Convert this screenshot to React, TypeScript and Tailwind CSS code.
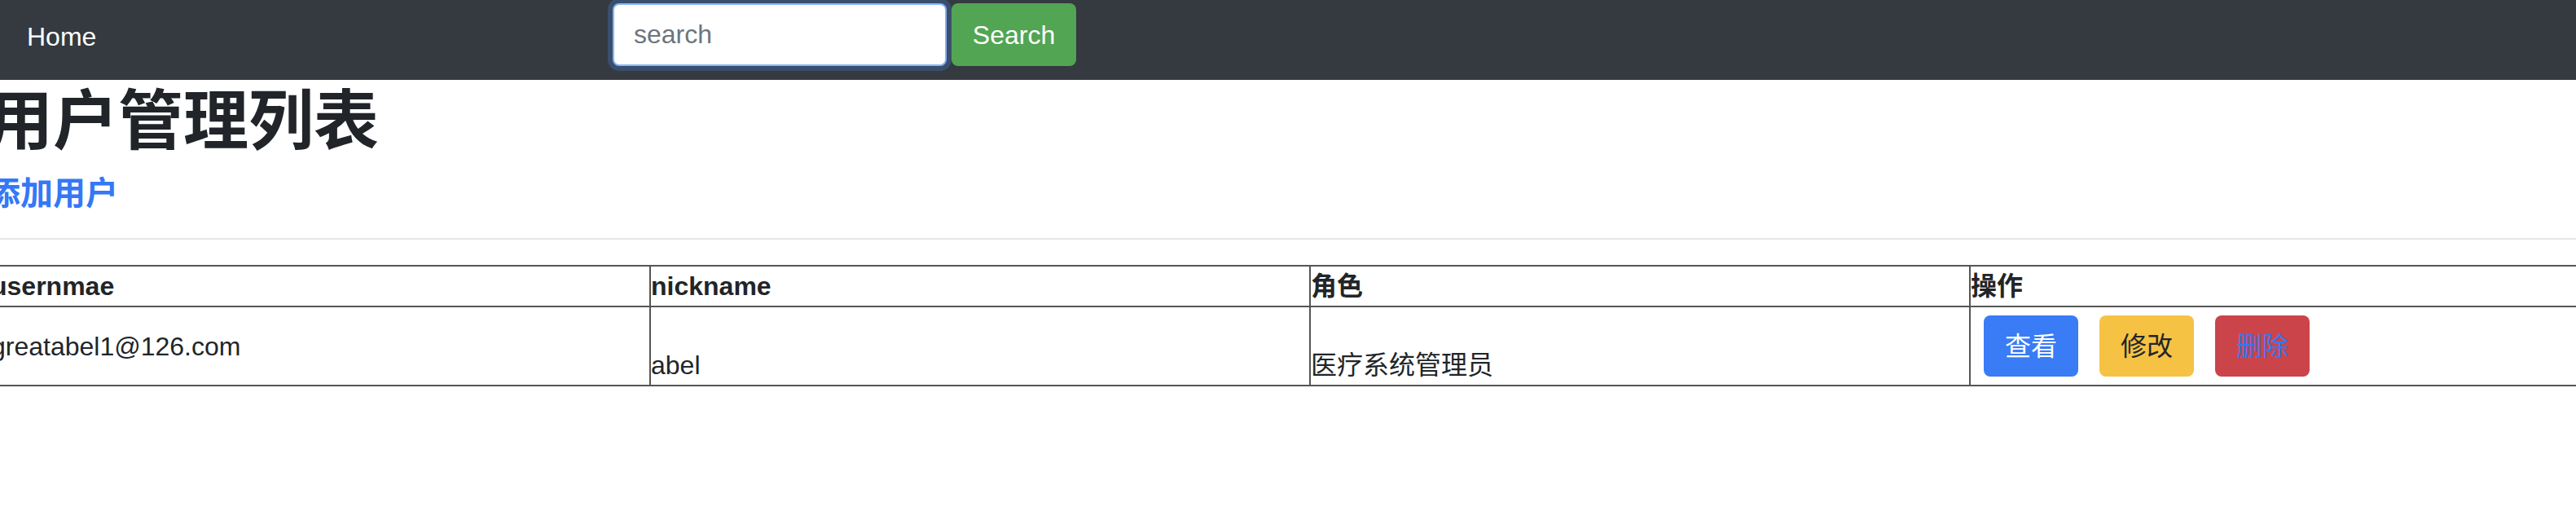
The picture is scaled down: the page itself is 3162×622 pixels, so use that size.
import React from "react";

const users = [
  { username: "greatabel1@126.com", nickname: "abel", role: "医疗系统管理员" },
];

export default function App() {
  return (
    <div className="w-full overflow-hidden bg-white text-[#212529] font-[family-name:'Liberation_Sans','Noto_Sans_CJK_SC',sans-serif]">
      {/* Navbar */}
      <nav className="flex h-[98px] items-start bg-[#343a40]">
        <div className="w-[752px] shrink-0 pl-[33px] pt-[21px]">
          <a className="text-[32px] leading-[48px] text-white">Home</a>
        </div>
        <div className="mt-[4px] flex items-start gap-[6px]">
          <input
            placeholder="search"
            className="h-[77px] w-[410px] rounded-[8px] border-2 border-[#86b7f5] bg-white px-[24px] text-[32px] text-[#495057] shadow-[0_0_0_6px_#3a4f6e] outline-none placeholder:text-[#6c757d]"
          />
          <button className="h-[77px] w-[153px] rounded-[8px] bg-[#52a552] text-[32px] text-white">
            Search
          </button>
        </div>
      </nav>

      <div className="ml-[-15px]">
        <h1 className="mt-[3px] text-[80px] font-semibold leading-[96px]">用户管理列表</h1>
        <a className="mt-[16px] block text-[40px] font-semibold leading-[48px] text-[#3478f6]">添加用户</a>
        <hr className="mt-[31px] border-0 border-t-2 border-[#e6e6e6]" />

        <table className="ml-[2px] mt-[31px] w-[3240px] table-fixed border-collapse border-2 border-[#555]">
          <thead>
            <tr>
              <th className="w-[810px] border-2 border-[#555] p-0 text-left text-[32px] font-bold leading-[48px]">usernmae</th>
              <th className="w-[810px] border-2 border-[#555] p-0 text-left text-[32px] font-bold leading-[48px]">nickname</th>
              <th className="w-[810px] border-2 border-[#555] p-0 text-left text-[32px] font-bold leading-[48px]">角色</th>
              <th className="w-[810px] border-2 border-[#555] p-0 text-left text-[32px] font-bold leading-[48px]">操作</th>
            </tr>
          </thead>
          <tbody>
            {users.map((u) => (
              <tr key={u.username} className="h-[97px]">
                <td className="border-2 border-[#555] p-0 align-middle text-[32px] leading-[48px]">{u.username}</td>
                <td className="border-2 border-[#555] p-0 align-bottom text-[32px] leading-[48px]">{u.nickname}</td>
                <td className="border-2 border-[#555] p-0 align-bottom text-[32px] leading-[48px]">{u.role}</td>
                <td className="border-2 border-[#555] p-0 align-middle">
                  <div className="ml-[16px] flex gap-[26px]">
                    <button className="h-[75px] w-[116px] rounded-[8px] bg-[#3a7bf6] text-[32px] text-white">查看</button>
                    <button className="h-[75px] w-[116px] rounded-[8px] bg-[#f6c244] text-[32px] text-[#212529]">修改</button>
                    <button className="h-[75px] w-[116px] rounded-[8px] bg-[#cb444a] text-[32px] text-[#3478f6]">删除</button>
                  </div>
                </td>
              </tr>
            ))}
          </tbody>
        </table>
      </div>
    </div>
  );
}
